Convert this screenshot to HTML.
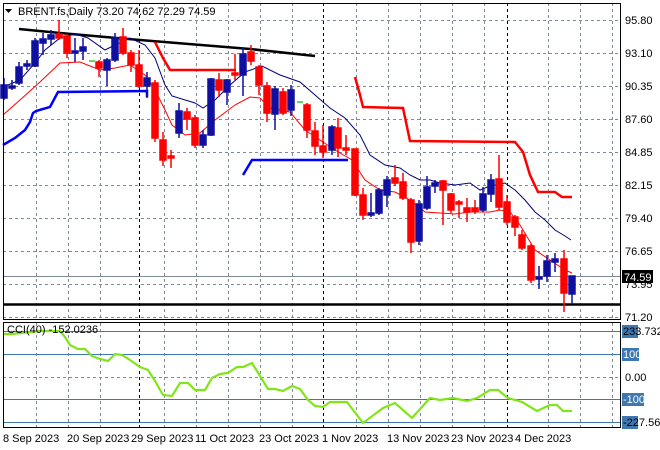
<!DOCTYPE html>
<html><head><meta charset="utf-8"><style>
html,body{margin:0;padding:0;background:#fff;width:660px;height:450px;overflow:hidden}
svg{display:block}
text{font-family:"Liberation Sans","DejaVu Sans",sans-serif;font-size:11px;fill:#000}
</style></head><body>
<svg width="660" height="450" viewBox="0 0 660 450" xmlns="http://www.w3.org/2000/svg">
<rect width="660" height="450" fill="#fff"/>
<g stroke="#7f8a99" stroke-width="1" stroke-dasharray="3,3" fill="none">
<path d="M3 20.5H621M3 53.5H621M3 86.5H621M3 119.5H621M3 152.5H621M3 185.5H621M3 218.5H621M3 251.5H621M3 284.5H621M3 317.5H621"/>
<path d="M36.5 3V320M68.5 3V320M100.5 3V320M164.5 3V320M196.5 3V320M228.5 3V320M260.5 3V320M292.5 3V320M356.5 3V320M388.5 3V320M420.5 3V320M452.5 3V320M484.5 3V320M548.5 3V320M580.5 3V320M612.5 3V320"/>
<path d="M36.5 323V428M68.5 323V428M100.5 323V428M164.5 323V428M196.5 323V428M228.5 323V428M260.5 323V428M292.5 323V428M356.5 323V428M388.5 323V428M420.5 323V428M452.5 323V428M484.5 323V428M548.5 323V428M580.5 323V428M612.5 323V428"/>
<path d="M3 377.5H621"/>
</g>
<g stroke="#000" stroke-width="1" stroke-dasharray="3,3">
<path d="M139.5 3V320M323.5 3V320M507.5 3V320M139.5 323V428M323.5 323V428M507.5 323V428"/>
</g>
<g stroke="#3d78b0" stroke-width="1">
<path d="M3 331.5H621M3 354.5H621M3 399.5H621M3 422.5H621"/>
</g>
<path d="M3 276.5H621" stroke="#7f8a99"/>
<path d="M3 304.5H621" stroke="#000" stroke-width="2.5"/>
<path d="M19 29L60 33L140 40L250 49L315 56" stroke="#000" stroke-width="2.5" fill="none"/>
<path d="M155 42L163 58L170 70L236 70" stroke="#f00" stroke-width="2.5" fill="none"/>
<path d="M355 77L360 95L363 107L403 108L410 141L515 142L523 152L530 175L538 192L555 192L562 197L572 197" stroke="#f00" stroke-width="2.5" fill="none"/>
<path d="M3 145L15 138L25 130L30 122L33 113L36 111L50 107L58 92L147 91L147 97" stroke="#00f" stroke-width="2.5" fill="none"/>
<path d="M243 175L252 160L348 160" stroke="#00f" stroke-width="2.5" fill="none"/>
<path d="M3 87L20 80L35 63L45 50L60 38L75 34L88 38L105 50L115 45L130 38L145 45L155 58L165 85L172 96L195 103L203 108L215 100L230 85L245 72L262 66L280 75L300 82L315 95L330 108L345 118L360 135L370 155L385 165L400 168L410 175L420 180L430 180L440 183L455 185L470 183L480 190L490 186L505 183L515 190L525 200L535 212L545 220L555 230L565 236L571 240" stroke="#000080" stroke-width="1" fill="none"/>
<path d="M3 115L20 100L40 82L60 63L80 62L100 70L115 68L130 65L145 75L155 90L165 110L172 125L185 135L200 133L215 120L235 105L250 97L260 98L270 108L290 112L305 130L320 140L335 150L352 160L365 180L380 190L395 192L410 200L425 212L440 213L455 214L470 212L490 212L500 210L510 212L520 225L535 250L550 260L565 270L572 273" stroke="#f00" stroke-width="1" fill="none"/>
<g stroke="#3c3" stroke-width="1.5"><path d="M89 61H95M297 102H303M464 212H470"/></g>
<g stroke-width="1.5">
<g stroke="#1010a0" fill="#1010a0">
<path d="M4 78V100M12 80V90M19 62V85M27 60V70M35 38V67M43 33V55M51 30V45M75 38V62M83 38V60M107 58V86M115 33V62M147 72V98M179 103V138M203 130V148M211 78V136M227 79V105M243 48V96M275 86V130M291 85V116M332 125V155M371 193V217M379 188V215M387 176V207M419 200V245M427 176V210M435 180V193M483 187V212M491 174V202M539 266V289M547 255V282M555 253V272M572 276V304"/>
<rect x="1" y="85" width="6" height="13"/><rect x="9" y="86" width="6" height="2"/><rect x="16" y="67" width="6" height="16"/><rect x="24" y="64" width="6" height="2"/><rect x="32" y="41" width="6" height="25"/><rect x="40" y="39" width="6" height="4"/><rect x="48" y="35" width="6" height="4"/><rect x="72" y="51" width="6" height="2"/><rect x="80" y="47" width="6" height="4"/><rect x="104" y="60" width="6" height="10"/><rect x="112" y="38" width="6" height="22"/><rect x="144" y="78" width="6" height="8"/><rect x="176" y="111" width="6" height="22"/><rect x="200" y="135" width="6" height="10"/><rect x="208" y="79" width="6" height="56"/><rect x="224" y="80" width="6" height="12"/><rect x="240" y="54" width="6" height="21"/><rect x="272" y="89" width="6" height="25"/><rect x="288" y="90" width="6" height="20"/><rect x="329" y="127" width="6" height="23"/><rect x="368" y="213" width="6" height="2"/><rect x="376" y="190" width="6" height="23"/><rect x="384" y="180" width="6" height="15"/><rect x="416" y="204" width="6" height="37"/><rect x="424" y="187" width="6" height="21"/><rect x="432" y="183" width="6" height="3"/><rect x="480" y="194" width="6" height="16"/><rect x="488" y="180" width="6" height="14"/><rect x="536" y="277" width="6" height="2"/><rect x="544" y="261" width="6" height="15"/><rect x="552" y="259" width="6" height="3"/><rect x="569" y="276" width="6" height="18"/>
</g>
<g stroke="#f00" fill="#f00">
<path d="M59 20V40M67 34V58M99 60V77M123 28V55M131 50V72M139 50V88M155 80V142M163 132V166M171 150V168M187 108V130M195 115V148M219 73V97M235 54V80M251 45V65M259 65V95M267 82V122M283 88V115M307 103V138M315 122V155M323 125V158M338 118V157M346 135V155M355 149V196M363 188V220M395 165V186M403 173V200M411 198V253M443 180V225M451 193V213M459 200V218M467 198V222M475 200V214M499 155V210M507 195V225M515 215V236M522 230V250M531 244V283M564 250V312"/>
<rect x="56" y="34" width="6" height="4"/><rect x="64" y="36" width="6" height="17"/><rect x="96" y="62" width="6" height="6"/><rect x="120" y="37" width="6" height="16"/><rect x="128" y="53" width="6" height="12"/><rect x="136" y="65" width="6" height="21"/><rect x="152" y="83" width="6" height="55"/><rect x="160" y="140" width="6" height="20"/><rect x="168" y="156" width="6" height="2"/><rect x="184" y="112" width="6" height="7"/><rect x="192" y="118" width="6" height="27"/><rect x="216" y="80" width="6" height="10"/><rect x="232" y="73" width="6" height="2"/><rect x="248" y="52" width="6" height="9"/><rect x="256" y="67" width="6" height="18"/><rect x="264" y="86" width="6" height="27"/><rect x="280" y="92" width="6" height="21"/><rect x="304" y="105" width="6" height="25"/><rect x="312" y="131" width="6" height="15"/><rect x="320" y="146" width="6" height="6"/><rect x="335" y="128" width="6" height="20"/><rect x="343" y="148" width="6" height="2"/><rect x="352" y="149" width="6" height="46"/><rect x="360" y="195" width="6" height="20"/><rect x="392" y="178" width="6" height="5"/><rect x="400" y="182" width="6" height="16"/><rect x="408" y="200" width="6" height="42"/><rect x="440" y="181" width="6" height="9"/><rect x="448" y="194" width="6" height="16"/><rect x="456" y="202" width="6" height="2"/><rect x="464" y="208" width="6" height="4"/><rect x="472" y="208" width="6" height="3"/><rect x="496" y="179" width="6" height="28"/><rect x="504" y="202" width="6" height="20"/><rect x="512" y="217" width="6" height="10"/><rect x="519" y="235" width="6" height="13"/><rect x="528" y="246" width="6" height="34"/><rect x="561" y="259" width="6" height="34"/>
</g>
</g>
<path d="M3 334L12 334L40 331L60 331L65 337L70 345L78 349L85 349L92 356L100 359L108 361L115 354L122 355L130 360L140 367L148 370L155 381L163 395L172 396L180 383L188 383L195 390L205 390L212 378L220 374L228 373L237 367L243 367L252 363L260 376L268 389L275 389L283 391L292 386L300 389L308 400L315 406L323 407L330 402L347 402L363 423L383 408L395 403L412 418L430 398L440 400L453 398L467 401L477 398L490 390L498 390L508 398L522 402L537 411L550 405L557 405L563 411L572 411" stroke="#7fe617" stroke-width="2.2" fill="none"/>
<rect x="3.5" y="3.5" width="617" height="316" fill="none" stroke="#000"/>
<rect x="3.5" y="322.5" width="617" height="105" fill="none" stroke="#000"/>
<path d="M5 9L12 9L8.5 13Z" fill="#000"/>
<text x="18" y="15">BRENT.fs,Daily  73.20 74.62 72.29 74.59</text>
<text x="7" y="333">CCI(40) -152.0236</text>
<g>
<text x="625" y="24">95.80</text><text x="625" y="57">93.10</text><text x="625" y="90">90.35</text><text x="625" y="123">87.60</text><text x="625" y="156">84.85</text><text x="625" y="189">82.15</text><text x="625" y="222">79.40</text><text x="625" y="255">76.65</text><text x="625" y="288">73.95</text><text x="625" y="321">71.20</text>
<rect x="622" y="270" width="31" height="13" fill="#000"/><text x="624" y="281" style="fill:#fff">74.59</text>
<rect x="622" y="325" width="16" height="13" fill="#3d78b0"/><text x="623" y="335">233.7321</text>
<rect x="622" y="348" width="17" height="13" fill="#3d78b0"/><text x="623" y="358" style="fill:#fff">100</text>
<text x="625" y="381">0.00</text>
<rect x="622" y="393" width="22" height="13" fill="#3d78b0"/><text x="623" y="403" style="fill:#fff">-100</text>
<rect x="622" y="416" width="16" height="13" fill="#3d78b0"/><text x="623" y="426">-227.566</text>
</g>
<g>
<text x="3" y="442">8 Sep 2023</text><text x="67" y="442">20 Sep 2023</text><text x="131" y="442">29 Sep 2023</text><text x="195" y="442">11 Oct 2023</text><text x="259" y="442">23 Oct 2023</text><text x="322" y="442">1 Nov 2023</text><text x="387" y="442">13 Nov 2023</text><text x="451" y="442">23 Nov 2023</text><text x="515" y="442">4 Dec 2023</text>
</g>
</svg>
</body></html>
